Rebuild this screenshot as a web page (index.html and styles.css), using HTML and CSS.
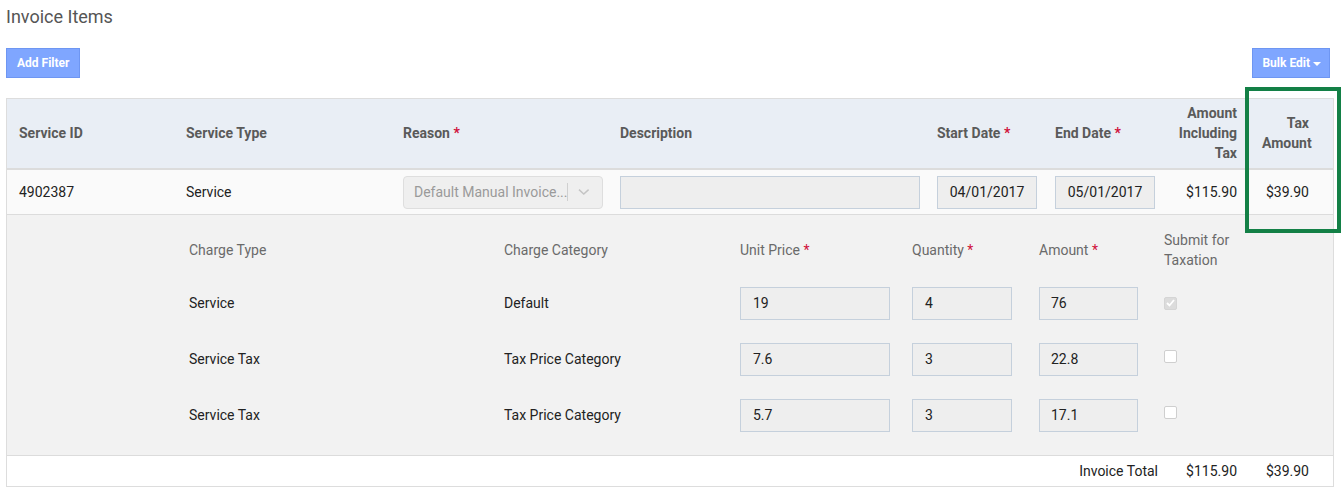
FILE: index.html
```html
<!DOCTYPE html>
<html>
<head>
<meta charset="utf-8">
<link rel="stylesheet" href="styles.css">
</head>
<body>
<div class="page">
  <h1 class="title">Invoice Items</h1>
  <div class="toolbar">
    <button class="btn">Add Filter</button>
    <button class="btn bulk">Bulk Edit <span class="caret"></span></button>
  </div>
  <div class="grid-table">
    <div class="row head">
      <div class="cell">Service ID</div>
      <div class="cell">Service Type</div>
      <div class="cell">Reason <span class="req">*</span></div>
      <div class="cell">Description</div>
      <div class="cell">Start Date <span class="req">*</span></div>
      <div class="cell">End Date <span class="req">*</span></div>
      <div class="cell right">Amount<br>Including<br>Tax</div>
      <div class="cell right last">Tax<br>Amount</div>
    </div>
    <div class="row main">
      <div class="cell">4902387</div>
      <div class="cell">Service</div>
      <div class="cell">
        <div class="select"><span class="sel-text">Default Manual Invoice...</span><span class="sel-sep"></span>
          <svg class="chev" width="12" height="8" viewBox="0 0 12 8"><path d="M1 1.5 L6 6 L11 1.5" fill="none" stroke="#c4c4c4" stroke-width="1.5"/></svg>
        </div>
      </div>
      <div class="cell"><div class="input desc"></div></div>
      <div class="cell"><div class="input date">04/01/2017</div></div>
      <div class="cell"><div class="input date">05/01/2017</div></div>
      <div class="cell right">$115.90</div>
      <div class="cell right last">$39.90</div>
    </div>
    <div class="detail">
      <div class="sub-row sub-head">
        <div>Charge Type</div>
        <div>Charge Category</div>
        <div>Unit Price <span class="req">*</span></div>
        <div>Quantity <span class="req">*</span></div>
        <div>Amount <span class="req">*</span></div>
        <div class="two">Submit for<br>Taxation</div>
      </div>
      <div class="sub-row item">
        <div>Service</div>
        <div>Default</div>
        <div><div class="input unit">19</div></div>
        <div><div class="input qty">4</div></div>
        <div><div class="input amt">76</div></div>
        <div><span class="check on"><svg width="9" height="8" viewBox="0 0 9 8"><path d="M1 4 L3.5 6.5 L8 1" fill="none" stroke="#fff" stroke-width="1.8"/></svg></span></div>
      </div>
      <div class="sub-row item">
        <div>Service Tax</div>
        <div>Tax Price Category</div>
        <div><div class="input unit">7.6</div></div>
        <div><div class="input qty">3</div></div>
        <div><div class="input amt">22.8</div></div>
        <div><span class="check"></span></div>
      </div>
      <div class="sub-row item">
        <div>Service Tax</div>
        <div>Tax Price Category</div>
        <div><div class="input unit">5.7</div></div>
        <div><div class="input qty">3</div></div>
        <div><div class="input amt">17.1</div></div>
        <div><span class="check"></span></div>
      </div>
    </div>
    <div class="row foot">
      <div class="cell right total-label">Invoice Total</div>
      <div class="cell right">$115.90</div>
      <div class="cell right last">$39.90</div>
    </div>
  </div>
  <div class="highlight"></div>
</div>
</body>
</html>
```

FILE: styles.css
```css
* { box-sizing: border-box; }
html, body { margin: 0; padding: 0; background: #fff; }
body {
  font-family: Roboto, "Liberation Sans", Arial, sans-serif;
  font-size: 14px;
  color: #222;
}
.page {
  position: relative;
  padding: 0 7px 0 6px;
  width: 1341px;
}
.title {
  margin: 0;
  padding-top: 6px;
  height: 48px;
  font-size: 18px;
  font-weight: 400;
  color: #555;
  line-height: 22px;
}
.toolbar {
  display: flex;
  justify-content: space-between;
  padding-right: 4px;
  height: 50px;
}
.btn {
  height: 30px;
  padding: 0 10px;
  background: #7fa6ff;
  border: 1px solid #6e96f2;
  color: #fff;
  font-family: Roboto, "Liberation Sans", Arial, sans-serif;
  font-size: 12px;
  font-weight: 700;
  border-radius: 0;
}
.btn.bulk { padding: 0 8px 0 9px; }
.caret {
  display: inline-block;
  width: 0; height: 0;
  border-left: 4px solid transparent;
  border-right: 4px solid transparent;
  border-top: 4px solid #fff;
  vertical-align: middle;
  margin-left: 0;
}
.grid-table {
  border: 1px solid #ddd;
  width: 1328px;
}
.row {
  display: grid;
  grid-template-columns: 167px 217px 217px 317px 118px 118px 89px 83px;
  align-items: center;
}
.cell { padding: 0 12px; }
.cell.right { text-align: right; padding-right: 13px; }
.cell.last { padding-right: 24px; }
.head {
  height: 71px;
  padding-bottom: 1px;
  background: #e9eef5;
  border-bottom: 2px solid #dcdcdc;
  font-weight: 700;
  color: #5a5a5a;
  line-height: 20px;
}
.req { color: #d0103a; font-weight: 700; }
.main {
  height: 45px;
  background: #fafafa;
  border-bottom: 1px solid #dcdcdc;
}
.select {
  display: flex;
  align-items: center;
  width: 200px;
  height: 33px;
  border: 1px solid #dedede;
  border-radius: 4px;
  background: #efefef;
  padding-left: 10px;
  color: #9a9a9a;
}
.sel-text { flex: 1; white-space: nowrap; }
.sel-sep { width: 1px; height: 18px; background: #d0d0d0; margin-right: 10px; }
.chev { margin-right: 12px; }
.input {
  height: 33px;
  background: #eeeeee;
  border: 1px solid #c5d0dc;
  display: flex;
  align-items: center;
  padding-left: 12px;
  color: #222;
}
.input.desc { width: 300px; }
.input.date { width: 100px; justify-content: center; padding-left: 0; }
.input.unit { width: 150px; }
.input.qty { width: 100px; }
.input.amt { width: 99px; padding-left: 11px; }
.detail {
  background: #f2f2f2;
  padding: 15px 0 12px 182px;
  border-bottom: 1px solid #dcdcdc;
}
.sub-row {
  display: grid;
  grid-template-columns: 315px 236px 172px 127px 125px 160px;
  align-items: center;
}
.sub-head {
  height: 40px;
  color: #6a6a6a;
  line-height: 20px;
  margin-bottom: 5px;
}
.sub-head .req { font-weight: 400; }
.item { height: 56px; }
.check {
  display: inline-flex;
  align-items: center;
  justify-content: center;
  width: 13px; height: 13px;
  border: 1px solid #cfcfcf;
  border-radius: 2px;
  background: #fff;
  position: relative;
  top: -1px;
}
.check.on { background: #dcdcdc; border-color: #d5d5d5; }
.foot {
  height: 30px;
  grid-template-columns: 1154px 89px 83px;
  background: #fff;
}
.cell.total-label { padding-right: 3px; }
.highlight {
  position: absolute;
  left: 1245px;
  top: 87px;
  width: 96px;
  height: 146px;
  border: 4px solid #138046;
}
```
